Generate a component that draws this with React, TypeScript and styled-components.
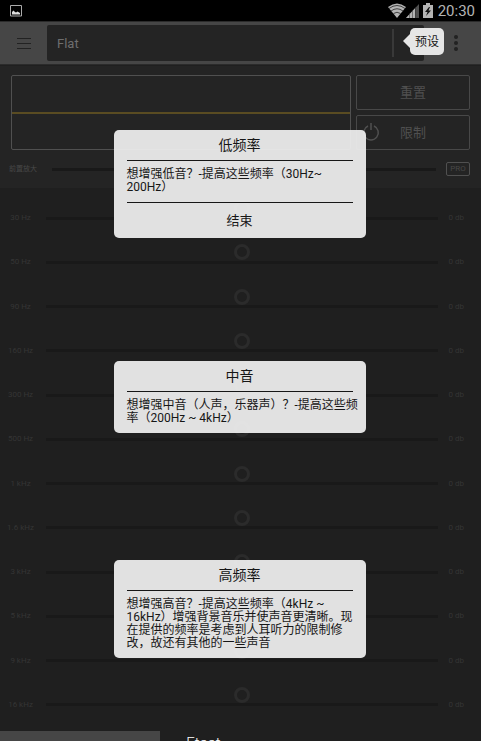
import React from "react";
import styled, { createGlobalStyle } from "styled-components";

const Global = createGlobalStyle`
  * { box-sizing: border-box; }
  body { margin: 0; background: #1f1f1f; overflow: hidden; font-family: Roboto, "Noto Sans CJK SC", sans-serif; }
  button, input { font: inherit; }
`;

const Screen = styled.div`
  position: relative;
  display: flex;
  flex-direction: column;
  height: 100vh;
  overflow: hidden;
  background: #1f1f1f;
`;

const StatusBar = styled.header`
  display: flex;
  flex: none;
  align-items: center;
  height: 21px;
  padding: 0 6px 0 10px;
  background: #000;
  color: #b4b4b4;
  font-size: 15px;
`;

const StatusIcons = styled.div`
  display: flex;
  align-items: center;
  margin-left: auto;
`;

const Clock = styled.time`
  margin-left: 5px;
  line-height: 20px;
`;

const Toolbar = styled.div`
  display: flex;
  flex: none;
  align-items: center;
  height: 44px;
  padding: 0 8px 0 10px;
  background: #464646;
  border-top: 1px solid #2b2b2b;
  border-bottom: 1px solid #2b2b2b;
`;

const IconButton = styled.button<{ $width: number }>`
  display: flex;
  align-items: center;
  justify-content: center;
  width: ${(p) => p.$width}px;
  height: 36px;
  padding: 0;
  border: 0;
  background: none;
`;

const PresetField = styled.div`
  display: flex;
  flex: 1;
  align-items: center;
  height: 36px;
  margin: 0 15px 0 9px;
  padding-left: 10px;
  background: #242424;
  border-radius: 2px;
`;

const PresetInput = styled.input`
  flex: 1;
  min-width: 0;
  height: 28px;
  padding: 0;
  border: 0;
  background: none;
  color: #6e6e6e;
  font-size: 13px;
`;

const PresetArrow = styled.button`
  width: 32px;
  height: 28px;
  padding: 0;
  border: 0;
  border-left: 2px solid #393939;
  background: none;
`;

const TopPanel = styled.section`
  flex: none;
  height: 123px;
  padding: 9px 11px 0;
  background: #242424;
  border-top: 1px solid #1f1f1f;
`;

const PanelGrid = styled.div`
  display: grid;
  grid-template-columns: 1fr 114px;
  gap: 5px;
  height: 75px;
`;

const Graph = styled.div`
  display: flex;
  align-items: center;
  border: 1px solid #505050;
  border-radius: 2px;
`;

const Curve = styled.div`
  width: 100%;
  height: 2px;
  background: #5a4c22;
`;

const Buttons = styled.div`
  display: flex;
  flex-direction: column;
  gap: 5px;
`;

const PanelButton = styled.button`
  position: relative;
  flex: 1;
  padding: 0;
  border: 1px solid #484848;
  border-radius: 2px;
  background: none;
  color: #505050;
  font-size: 13px;
  line-height: 20px;

  svg { position: absolute; left: 5px; top: 6px; }
`;

const SliderRow = styled.label<{ $preamp?: boolean }>`
  display: grid;
  grid-template-columns: ${(p) => (p.$preamp ? "45px 1fr 34px" : "41px 1fr 29px")};
  align-items: center;
  height: ${(p) => (p.$preamp ? "38px" : "auto")};
  margin-left: ${(p) => (p.$preamp ? "-4px" : "0")};
  color: ${(p) => (p.$preamp ? "#484848" : "#353535")};
  font-size: 8px;
  line-height: 12px;
`;

const Frequency = styled.span`
  padding-right: 10px;
  text-align: center;
  white-space: nowrap;
`;

const PreampName = styled.span`
  padding-left: 2px;
  font-size: 7px;
  white-space: nowrap;
`;

const Level = styled.output`
  padding-right: 3px;
  text-align: right;
  white-space: nowrap;
`;

const ProTag = styled.span`
  justify-self: end;
  width: 24px;
  height: 14px;
  border: 1px solid #505050;
  border-radius: 2px;
  text-align: center;
`;

const Range = styled.input<{ $knob?: boolean }>`
  width: 100%;
  height: 38px;
  margin: 0;
  appearance: none;
  background: linear-gradient(#191919, #191919) center / 100% 3px no-repeat;

  &::-webkit-slider-thumb {
    appearance: none;
    width: 16px;
    height: 16px;
    margin-top: -18px;
    border: 3px solid #2b2b2b;
    border-radius: 50%;
    background: transparent;
    opacity: ${(p) => (p.$knob ? 1 : 0)};
  }
`;

const Bands = styled.main`
  display: grid;
  flex: none;
  grid-template-rows: repeat(12, 1fr);
  height: 531px;
  margin-top: 8px;
  padding: 0 14px 0 5px;
`;

const Tabs = styled.nav`
  display: flex;
  flex: none;
  margin-top: 4px;
`;

const Tab = styled.button<{ $active?: boolean }>`
  display: flex;
  align-items: flex-start;
  width: 33.33%;
  height: 48px;
  padding: 2px 0 0 26px;
  border: 0;
  background: ${(p) => (p.$active ? "#464646" : "#1f1f1f")};
  color: #fff;
  font-size: 15px;
  font-weight: 300;
  line-height: 20px;
`;

const Tips = styled.div`
  position: absolute;
  inset: 130px 0 0;
  display: flex;
  flex-direction: column;
  align-items: center;
  pointer-events: none;
`;

const TipCard = styled.section<{ $gap: number }>`
  width: 252px;
  margin: 0 2px ${(p) => p.$gap}px 0;
  padding: 0 13px 8px;
  border-radius: 5px;
  background: rgba(236, 236, 236, 0.95);
  color: #161616;
  pointer-events: auto;
`;

const TipTitle = styled.h2`
  margin: 0 0 7px;
  padding: 4px 0;
  border-bottom: 1px solid #161616;
  font-size: 14px;
  font-weight: 400;
  line-height: 22px;
  text-align: center;
`;

const TipText = styled.p`
  margin: 0 -7px 0 0;
  font-size: 12px;
  line-height: 13px;
`;

const TipDone = styled.button`
  width: 100%;
  height: 28px;
  margin-top: 8px;
  padding: 8px 0 0;
  border: 0;
  border-top: 1px solid #161616;
  background: none;
  color: inherit;
  font-size: 13px;
  line-height: 20px;
`;

const PresetHint = styled.div`
  position: absolute;
  top: 28px;
  right: 37px;
  width: 34px;
  height: 27px;
  border-radius: 5px;
  background: #e6e6e6;
  color: #161616;
  font-size: 12px;
  line-height: 29px;
  text-align: center;

  &::before {
    content: "";
    position: absolute;
    left: -7px;
    top: 6px;
    border: 7px solid transparent;
    border-left: 0;
    border-right-color: #e6e6e6;
  }
`;

const BatterySlot = styled.span`
  display: flex;
  margin-left: 4px;
`;

const bands = ["30 Hz", "50 Hz", "90 Hz", "160 Hz", "300 Hz", "500 Hz", "1 kHz", "1.6 kHz", "3 kHz", "5 kHz", "9 kHz", "16 kHz"];

const PictureIcon = () => (
  <svg width="12" height="12" viewBox="0 0 12 12" aria-hidden="true">
    <path d="M.5.5h11v10.5H.5z" fill="none" stroke="#aaa" />
    <path d="M2 9.500V7l1.500-1.500L5 7l1 .5 1.500-1L10 8v1.500z" fill="#ddd" />
  </svg>
);

const WifiIcon = () => (
  <svg width="18" height="15" viewBox="0 0 18 15" aria-hidden="true">
    <path d="M0 4Q9-3 18 4L9 15z" fill="#b4b4b4" />
    <path d="M1 5.5Q9-.5 17 5.5M3 8Q9 3.500 15 8M5.500 10.500Q9 8 12.500 10.500" fill="none" stroke="#333" strokeWidth=".9" />
  </svg>
);

const SignalIcon = () => (
  <svg width="13" height="14" viewBox="0 0 13 14" aria-hidden="true">
    <path d="M0 14L13 0v14z" fill="#505050" />
    <path d="M0 14L9 4.300V14z" fill="#b4b4b4" />
    <path d="M3.500 9v5M6.500 6v8M9.500 3v11" stroke="#333" strokeWidth=".5" />
  </svg>
);

const BatteryIcon = () => (
  <svg width="10" height="15" viewBox="0 0 10 15" aria-hidden="true">
    <path d="M0 2h3V0h4v2h3v13H0z" fill="#b4b4b4" />
    <path d="M6 4L2 9h2.500L3 13l5-5.500H5.500L7 4z" fill="#111" />
  </svg>
);

const PowerIcon = () => (
  <svg width="18" height="20" viewBox="0 0 18 20" fill="none" stroke="#505050" strokeWidth="1.5" aria-hidden="true">
    <path d="M6 4A7.300 7.300 0 1 0 12 4M9 1v7" />
  </svg>
);

export default function App() {
  return (
    <Screen>
      <Global />
      <StatusBar>
        <PictureIcon />
        <StatusIcons>
          <WifiIcon />
          <SignalIcon />
          <BatterySlot><BatteryIcon /></BatterySlot>
          <Clock>20:30</Clock>
        </StatusIcons>
      </StatusBar>
      <Toolbar>
        <IconButton $width={28} aria-label="Menu">
          <svg width="14" height="12" viewBox="0 0 14 12" stroke="#222" aria-hidden="true">
            <path d="M0 1.500h14M0 6.500h14M0 11.500h14" />
          </svg>
        </IconButton>
        <PresetField>
          <PresetInput aria-label="预设" defaultValue="Flat" />
          <PresetArrow aria-label="Open presets" />
        </PresetField>
        <IconButton $width={34} aria-label="More">
          <svg width="6" height="18" viewBox="0 0 6 18" fill="#222" aria-hidden="true">
            <circle cx="3" cy="3" r="2" /><circle cx="3" cy="9" r="2" /><circle cx="3" cy="15" r="2" />
          </svg>
        </IconButton>
      </Toolbar>
      <TopPanel>
        <PanelGrid>
          <Graph><Curve /></Graph>
          <Buttons>
            <PanelButton>重置</PanelButton>
            <PanelButton><PowerIcon />限制</PanelButton>
          </Buttons>
        </PanelGrid>
        <SliderRow $preamp>
          <PreampName>前置放大</PreampName>
          <Range type="range" />
          <ProTag>PRO</ProTag>
        </SliderRow>
      </TopPanel>
      <Bands>
        {bands.map((band) => (
          <SliderRow key={band}>
            <Frequency>{band}</Frequency>
            <Range type="range" $knob />
            <Level>0 db</Level>
          </SliderRow>
        ))}
      </Bands>
      <Tabs>
        <Tab $active aria-label="Equalizer" />
        <Tab>Etaat</Tab>
      </Tabs>
      <Tips>
        <TipCard $gap={123}>
          <TipTitle>低频率</TipTitle>
          <TipText>想增强低音？-提高这些频率（30Hz~ 200Hz）</TipText>
          <TipDone>结束</TipDone>
        </TipCard>
        <TipCard $gap={127}>
          <TipTitle>中音</TipTitle>
          <TipText>想增强中音（人声，乐器声）？-提高这些频率（200Hz ~ 4kHz）</TipText>
        </TipCard>
        <TipCard $gap={0}>
          <TipTitle>高频率</TipTitle>
          <TipText>想增强高音？-提高这些频率（4kHz ~ 16kHz）增强背景音乐并使声音更清晰。现在提供的频率是考虑到人耳听力的限制修改，故还有其他的一些声音</TipText>
        </TipCard>
      </Tips>
      <PresetHint>预设</PresetHint>
    </Screen>
  );
}
